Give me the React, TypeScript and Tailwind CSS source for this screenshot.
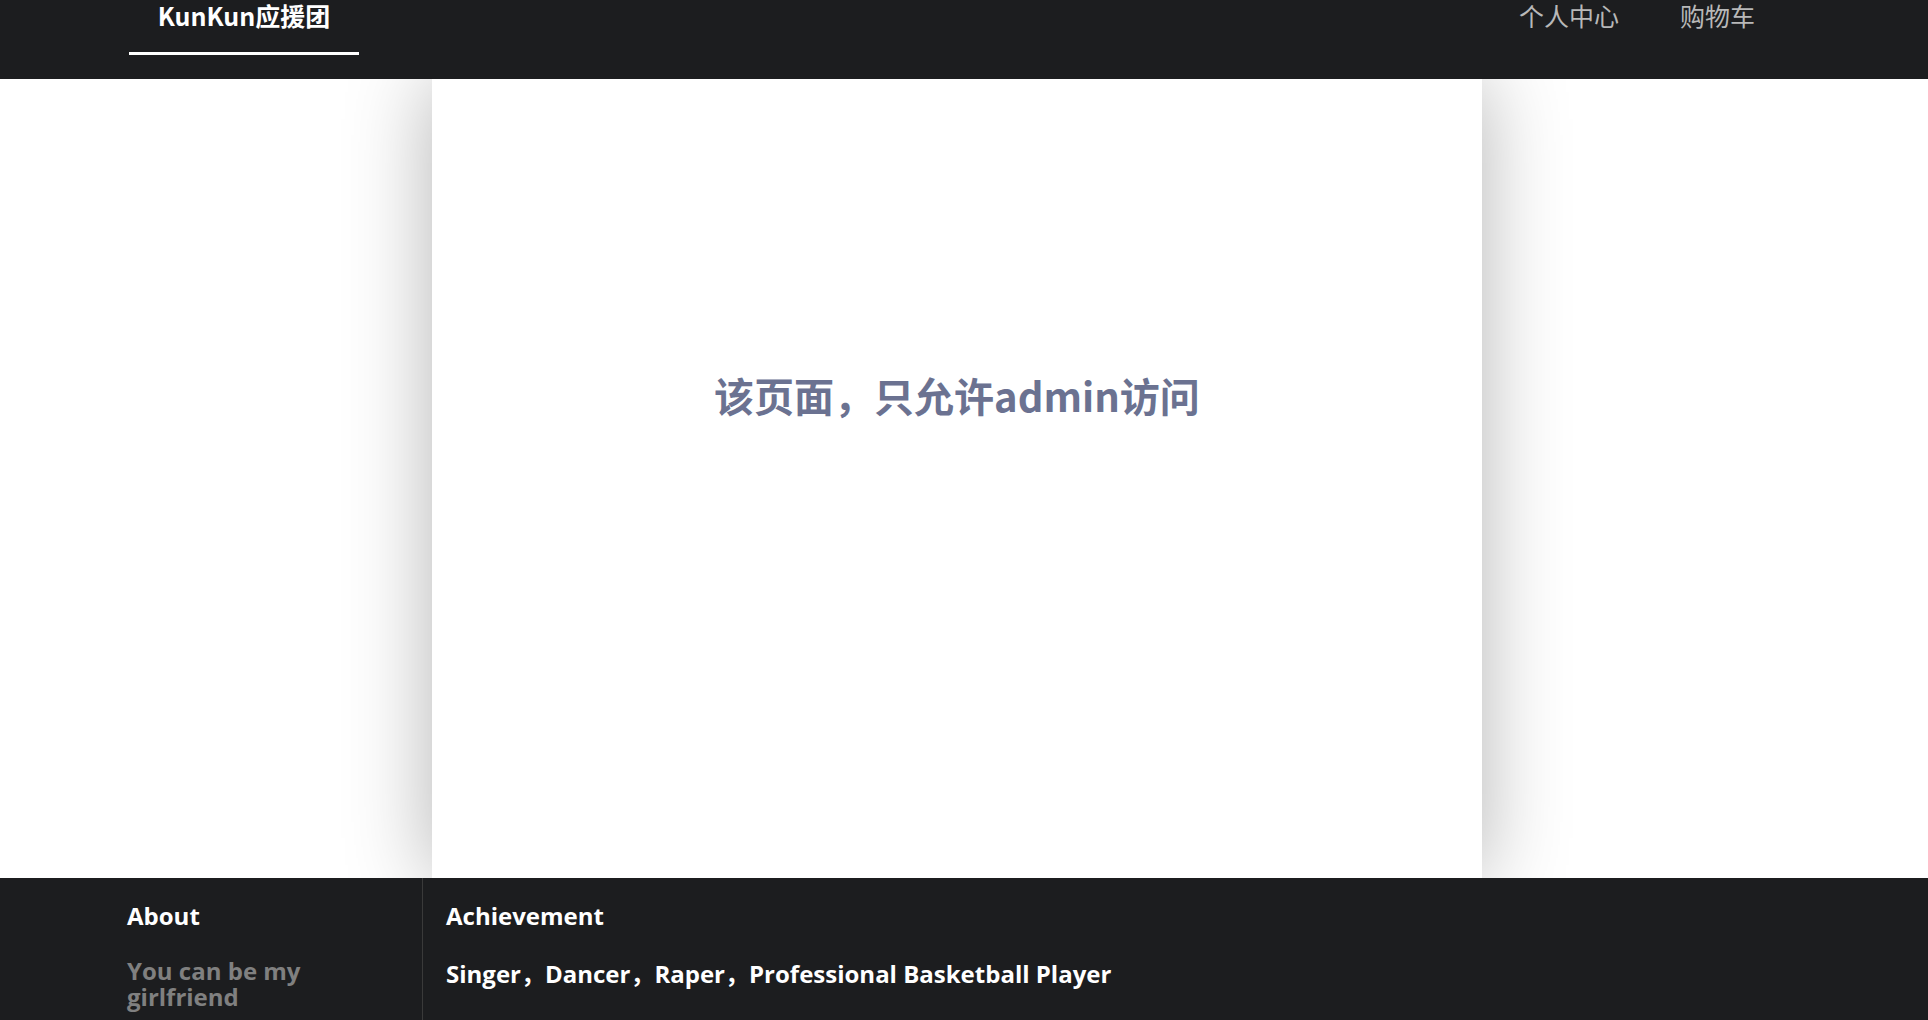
export default function App() {
  return (
    <div className="min-h-screen bg-white font-['Open_Sans','Noto_Sans_CJK_SC',sans-serif]">
      {/* Header */}
      <header className="relative z-10 h-[79px] bg-[#1c1d1f] flex items-start justify-between">
        <a
          href="#"
          className="ml-[129px] w-[230px] text-center border-b-[3px] border-white pb-[22px] text-white font-bold text-[25px] leading-[30px] font-['Noto_Sans_CJK_SC',sans-serif]"
        >
          KunKun应援团
        </a>
        <nav className="mr-[173px] flex items-start gap-[61px] text-[25px] leading-[31px] text-[#b8b8b8] font-['Noto_Sans_CJK_SC',sans-serif]">
          <a href="#">个人中心</a>
          <a href="#">购物车</a>
        </nav>
      </header>

      {/* Main card */}
      <main className="ml-[432px] w-[1050px] h-[799px] bg-white shadow-[0_0_80px_rgba(0,0,0,0.3)] pt-[291px]">
        <h2 className="text-center text-[40px] leading-[50px] font-bold text-[#6b7291] font-['Noto_Sans_CJK_SC',sans-serif]">
          该页面，只允许admin访问
        </h2>
      </main>

      {/* Footer */}
      <footer className="bg-[#1c1d1f] h-[160px] flex">
        <div className="w-[423px] border-r border-[#3a3a3a] pl-[127px] pt-[20px]">
          <h3 className="text-white font-bold text-[24px] leading-[36px]">About</h3>
          <p className="mt-[24px] w-[200px] text-[#808080] font-bold text-[24px] leading-[26px]">
            You can be my girlfriend
          </p>
        </div>
        <div className="pl-[23px] pt-[20px]">
          <h3 className="text-white font-bold text-[24px] leading-[36px]">Achievement</h3>
          <p className="mt-[22px] text-white font-bold text-[24px] leading-[36px]">
            Singer，Dancer，Raper，Professional Basketball Player
          </p>
        </div>
      </footer>
    </div>
  );
}
